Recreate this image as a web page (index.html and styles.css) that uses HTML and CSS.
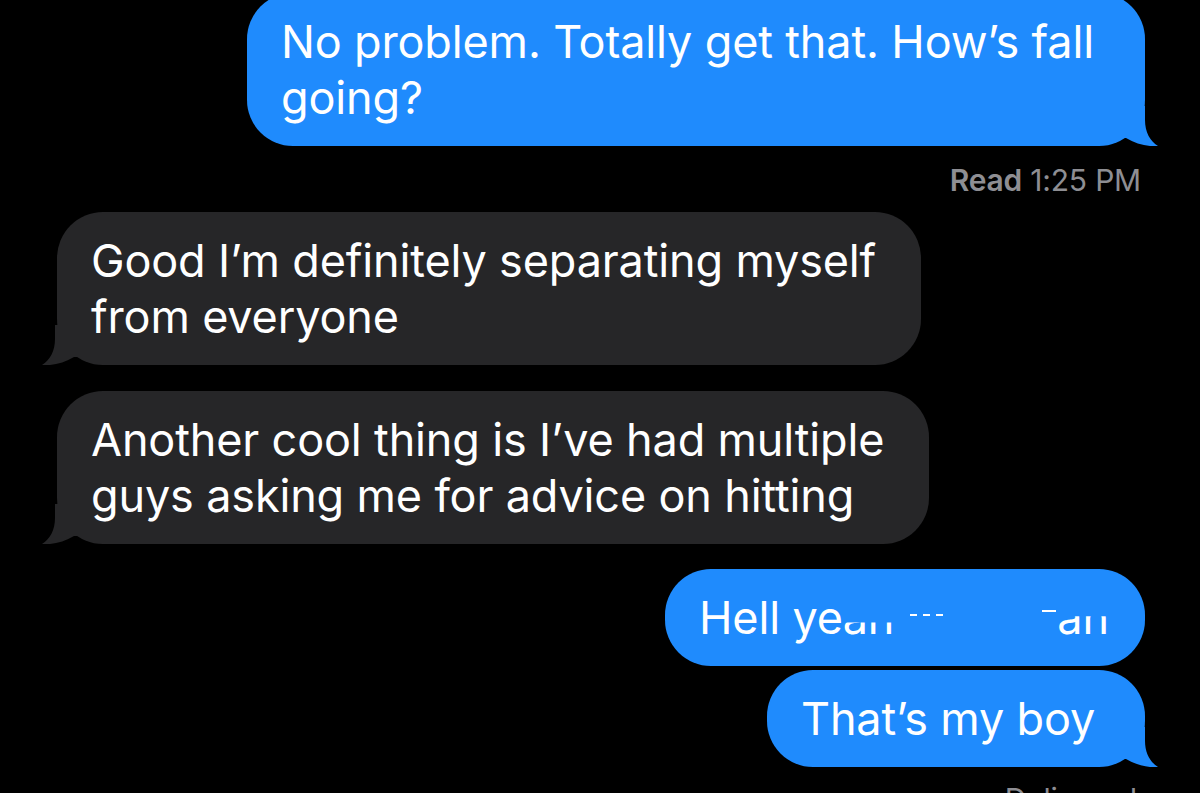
FILE: index.html
```html
<!DOCTYPE html>
<html lang="en">
<head>
<meta charset="utf-8">
<title>Messages</title>
<link rel="stylesheet" href="styles.css">
</head>
<body>
<main class="thread">
  <div class="msg out m-fall">
    <p>No problem. Totally get that. How’s fall<br>going?</p>
    <svg class="tail" viewBox="0 0 50 40" aria-hidden="true"><path d="M4 0H37V14C37 26 42 35 50 40C40 41 28 38 18 32L4 32Z"/></svg>
  </div>
  <div class="receipt r-read"><b>Read</b> 1:25 PM</div>
  <div class="msg in m-good">
    <p>Good I’m definitely separating myself<br>from everyone</p>
    <svg class="tail" viewBox="0 0 50 40" aria-hidden="true"><path d="M4 0H37V14C37 26 42 35 50 40C40 41 28 38 18 32L4 32Z"/></svg>
  </div>
  <div class="msg in m-cool">
    <p>Another cool thing is I’ve had multiple<br>guys asking me for advice on hitting</p>
    <svg class="tail" viewBox="0 0 50 40" aria-hidden="true"><path d="M4 0H37V14C37 26 42 35 50 40C40 41 28 38 18 32L4 32Z"/></svg>
  </div>
  <div class="msg out m-hell">
    <p>Hell ye<span class="cut cut-low">ah</span><span class="gap"><i></i><i></i><i></i></span><span class="bar"></span><span class="cut cut-high">an</span></p>
  </div>
  <div class="msg out m-boy">
    <p>That’s my boy</p>
    <svg class="tail" viewBox="0 0 50 40" aria-hidden="true"><path d="M4 0H37V14C37 26 42 35 50 40C40 41 28 38 18 32L4 32Z"/></svg>
  </div>
  <div class="receipt r-delivered">Delivered</div>
</main>
</body>
</html>
```
FILE: styles.css
```css
html, body {
  margin: 0;
  padding: 0;
  background: #000;
}

body {
  width: 1200px;
  height: 793px;
  overflow: hidden;
  font-family: "Inter", "Liberation Sans", Arial, sans-serif;
  color: #fff;
}

.thread {
  display: flex;
  flex-direction: column;
  padding: 0 55px 0 57px;
  margin-top: -7px;
}

.msg {
  position: relative;
  box-sizing: border-box;
  border-radius: 46px;
  padding: 21px 35px 20px 34px;
}

.msg p {
  margin: 0;
  font-size: 45px;
  line-height: 56px;
  letter-spacing: -0.15px;
  white-space: nowrap;
}

.msg.out {
  align-self: flex-end;
  background: #1f8bfd;
}

.msg.in {
  align-self: flex-start;
  background: #262628;
}

.tail {
  position: absolute;
  bottom: 0;
  width: 50px;
  height: 40px;
}

.msg.out .tail {
  right: -13px;
  fill: #1f8bfd;
}

.msg.in .tail {
  left: -15px;
  fill: #262628;
  transform: scaleX(-1);
}

.m-fall { width: 898px; }
.m-good { width: 864px; margin-top: 14px; }
.m-cool { width: 872px; margin-top: 26px; }
.m-hell { width: 480px; margin-top: 25px; }
.m-boy  { width: 378px; margin-top: 4px; }

.receipt {
  align-self: flex-end;
  margin-right: 4px;
  font-size: 30px;
  line-height: 36px;
  color: #8e8e93;
  letter-spacing: -0.2px;
}

.receipt b {
  font-weight: 600;
}

.r-read { margin-top: 16px; }
.r-delivered { margin-top: 14px; margin-right: 8px; }

/* redacted portion of the "Hell yeah" bubble */
.cut {
  display: inline-block;
}
.cut-low { clip-path: inset(58% 0 0 0); }
.cut-high { clip-path: inset(47% 0 0 0); }

.gap {
  display: inline-block;
  width: 148px;
  padding-left: 16px;
  box-sizing: border-box;
}

.gap i {
  display: inline-block;
  width: 7px;
  height: 2px;
  margin-right: 6px;
  background: #fff;
  vertical-align: 18px;
}

.bar {
  display: inline-block;
  width: 14px;
  height: 2px;
  background: #fff;
  vertical-align: 22px;
  margin-right: 1px;
}
```
